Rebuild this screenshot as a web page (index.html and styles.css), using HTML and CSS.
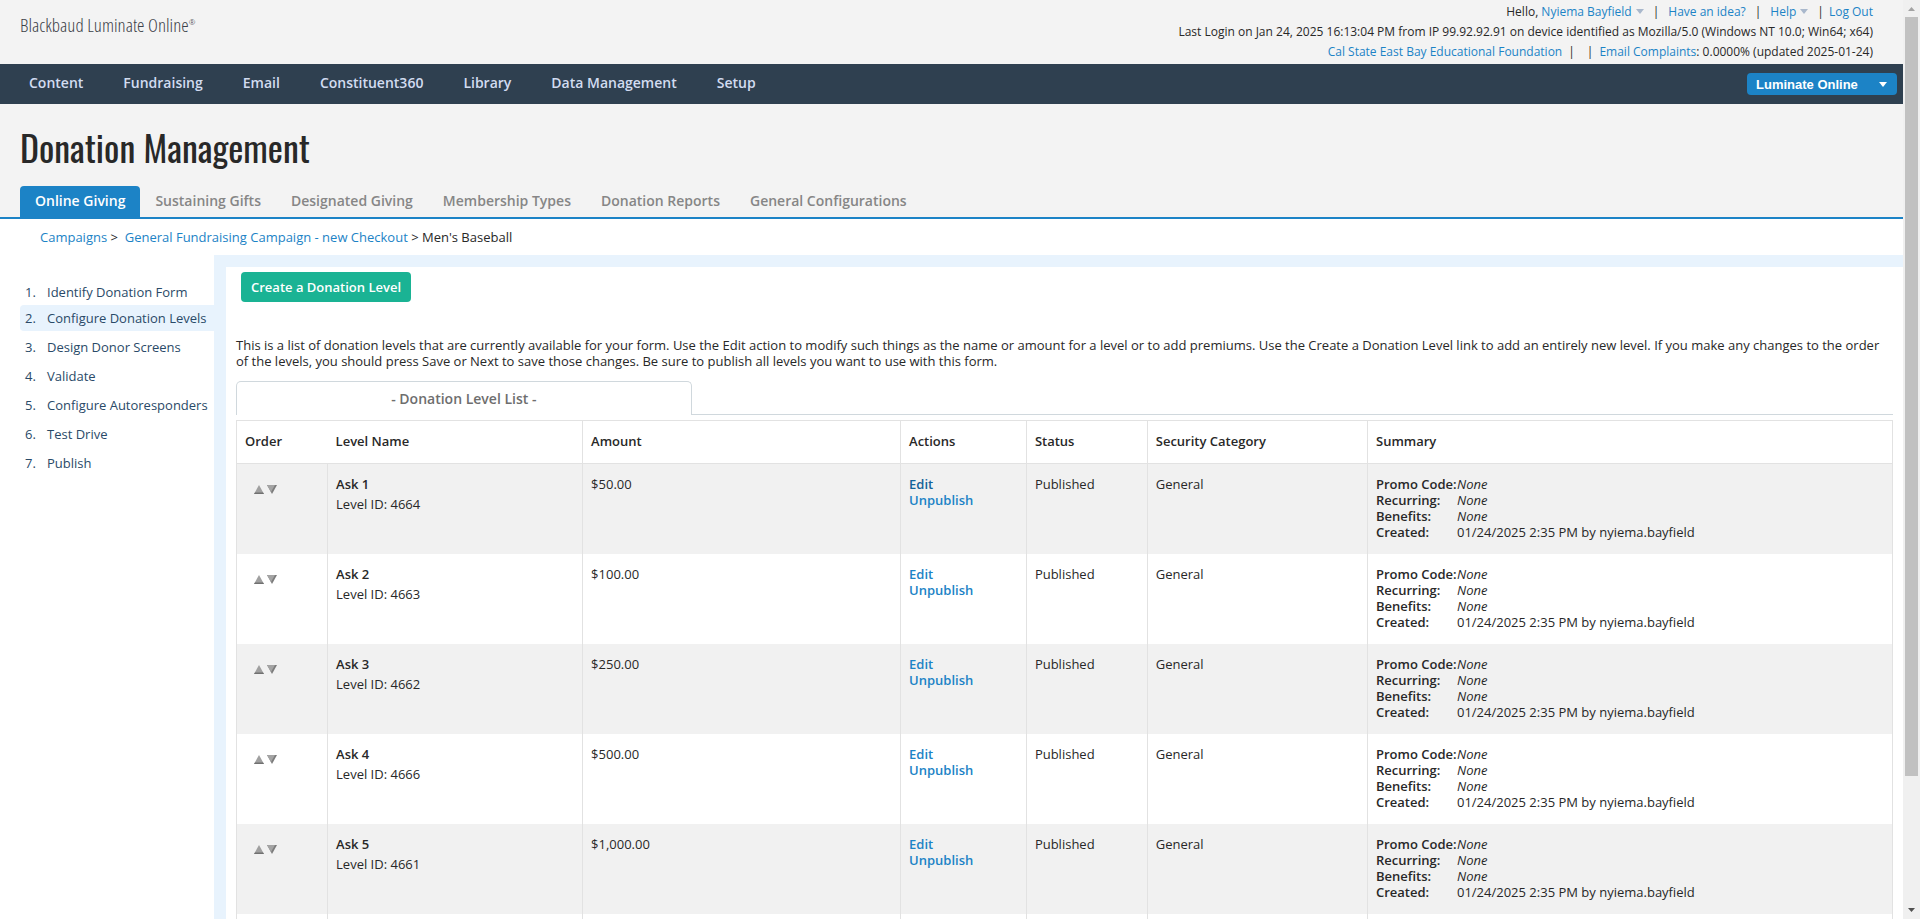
FILE: index.html
```html
<!DOCTYPE html>
<html lang="en">
<head>
    <meta charset="UTF-8">
    <meta name="viewport" content="width=device-width, initial-scale=1.0">
    <title>Donation Management</title>
    <link rel="stylesheet" href="styles.css">
</head>
<body>
    <div class="page">
        <header class="top">
            <div class="brand">Blackbaud Luminate Online<sup>®</sup></div>
            <div class="account">
                <div class="user-links">Hello, <a href="#">Nyiema Bayfield<span class="caret"></span></a><span class="bar">|</span><a href="#">Have an idea?</a><span class="bar">|</span><a href="#">Help<span class="caret"></span></a><span class="bar">|</span><a href="#">Log Out</a></div>
                <div>Last Login on Jan 24, 2025 16:13:04 PM from IP 99.92.92.91 on device identified as Mozilla/5.0 (Windows NT 10.0; Win64; x64)</div>
                <div><a href="#">Cal State East Bay Educational Foundation</a><span class="bar">|</span><span class="bar">|</span><a href="#">Email Complaints</a>: 0.0000% (updated 2025-01-24)</div>
            </div>
        </header>
        <nav class="main-nav">
            <a href="#">Content</a>
            <a href="#">Fundraising</a>
            <a href="#">Email</a>
            <a href="#">Constituent360</a>
            <a href="#">Library</a>
            <a href="#">Data Management</a>
            <a href="#">Setup</a>
            <button class="product" type="button">Luminate Online<span class="caret"></span></button>
        </nav>
        <h1>Donation Management</h1>
        <nav class="tabs">
            <a class="active" href="#">Online Giving</a>
            <a href="#">Sustaining Gifts</a>
            <a href="#">Designated Giving</a>
            <a href="#">Membership Types</a>
            <a href="#">Donation Reports</a>
            <a href="#">General Configurations</a>
        </nav>
        <div class="breadcrumb"><a href="#">Campaigns</a> &gt; &nbsp;<a href="#">General Fundraising Campaign - new Checkout</a> &gt; Men's Baseball</div>
        <div class="columns">
            <ol class="steps">
                <li><a href="#"><span>1.</span>Identify Donation Form</a></li>
                <li class="current"><a href="#"><span>2.</span>Configure Donation Levels</a></li>
                <li><a href="#"><span>3.</span>Design Donor Screens</a></li>
                <li><a href="#"><span>4.</span>Validate</a></li>
                <li><a href="#"><span>5.</span>Configure Autoresponders</a></li>
                <li><a href="#"><span>6.</span>Test Drive</a></li>
                <li><a href="#"><span>7.</span>Publish</a></li>
            </ol>
            <main class="content">
                <button class="create" type="button">Create a Donation Level</button>
                <p>This is a list of donation levels that are currently available for your form. Use the Edit action to modify such things as the name or amount for a level or to add premiums. Use the Create a Donation Level link to add an entirely new level. If you make any changes to the order of the levels, you should press Save or Next to save those changes. Be sure to publish all levels you want to use with this form.</p>
                <div class="list-tabs"><h2>- Donation Level List -</h2></div>
                <table class="levels">
                    <colgroup>
                        <col class="c-order"><col class="c-name"><col class="c-amount"><col class="c-actions"><col class="c-status"><col class="c-security"><col>
                    </colgroup>
                    <thead>
                        <tr><th>Order</th><th>Level Name</th><th>Amount</th><th>Actions</th><th>Status</th><th>Security Category</th><th>Summary</th></tr>
                    </thead>
                    <tbody id="levels"></tbody>
                    <tfoot>
                        <tr><td></td><td></td><td></td><td></td><td></td><td></td><td></td></tr>
                    </tfoot>
                </table>
            </main>
        </div>
    </div>
    <div class="scrollbar">
        <svg width="17" height="17" viewBox="0 0 17 17"><path d="M5 11h7L8.500 7z" fill="#a3a3a3"/></svg>
        <div class="track"></div>
        <div class="rest"></div>
        <svg width="17" height="17" viewBox="0 0 17 17"><path d="M5 6h7L8.500 10z" fill="#505050"/></svg>
    </div>
    <script>
        let levels = [
            ["Ask 1", 4664, "$50.00"],
            ["Ask 2", 4663, "$100.00"],
            ["Ask 3", 4662, "$250.00"],
            ["Ask 4", 4666, "$500.00"],
            ["Ask 5", 4661, "$1,000.00"]
        ];
        let rows = "";
        for (let i = 0; i < levels.length; i++) {
            rows += `<tr>
                <td class="order">
                    <button type="button" aria-label="Move up"><svg width="10" height="9" viewBox="0 0 10 9"><path d="M0 9h10L5 0z" fill="#a0a0a0"/><path d="M0 9h10L9 7.500H1z" fill="#707070"/></svg></button>
                    <button type="button" aria-label="Move down"><svg width="10" height="9" viewBox="0 0 10 9"><path d="M0 0h10L5 9z" fill="#7c7c7c"/><path d="M0 0h8L4 7z" fill="#a4a4a4"/></svg></button>
                </td>
                <td><b>${levels[i][0]}</b><div class="level-id">Level ID: ${levels[i][1]}</div></td>
                <td>${levels[i][2]}</td>
                <td class="actions"><a href="#">Edit</a><a href="#">Unpublish</a></td>
                <td>Published</td>
                <td>General</td>
                <td><dl>
                    <dt>Promo Code:</dt><dd><i>None</i></dd>
                    <dt>Recurring:</dt><dd><i>None</i></dd>
                    <dt>Benefits:</dt><dd><i>None</i></dd>
                    <dt>Created:</dt><dd>01/24/2025 2:35 PM by nyiema.bayfield</dd>
                </dl></td>
            </tr>`;
        }
        document.getElementById("levels").innerHTML = rows;
    </script>
</body>
</html>
```
FILE: styles.css
```css
* {
    box-sizing: border-box;
}
body {
    margin: 0;
    display: flex;
    height: 100vh;
    overflow: hidden;
    background: #fff;
    color: #282828;
    font: 13px/16px "Open Sans", sans-serif;
}
a {
    color: #1c83c6;
    text-decoration: none;
}
button {
    border: 0;
    cursor: pointer;
}
.page {
    flex: 1;
    overflow: hidden;
    background: linear-gradient(#f3f3f3 217px, #fff 217px);
}
.top {
    display: flex;
    justify-content: space-between;
    height: 64px;
    padding: 2px 30px 0 20px;
}
.brand {
    color: #3c4148;
    font: 300 19px/46px "Open Sans Condensed Light", "Oswald Light", "Oswald", sans-serif;
}
.brand sup {
    font-size: 8px;
    line-height: 1px;
}
.account {
    font-size: 12px;
    line-height: 20px;
    text-align: right;
}
.bar {
    margin: 0 6px;
}
.user-links .bar {
    margin: 0 9px;
}
.user-links .bar:nth-last-child(2) {
    margin-right: 5px;
}
.caret {
    display: inline-block;
    margin-left: 4px;
    border: 4px solid transparent;
    border-top: 5px solid #a9b8cc;
    border-bottom: 0;
    vertical-align: 2px;
}
.main-nav {
    display: flex;
    align-items: center;
    gap: 40px;
    height: 40px;
    padding: 0 6px 0 29px;
    background: #2f4050;
}
.main-nav a {
    padding-bottom: 2px;
    color: #d2dcf0;
    font-size: 14px;
    font-weight: 600;
}
.product {
    display: flex;
    align-items: center;
    justify-content: space-between;
    width: 150px;
    height: 22px;
    margin-left: auto;
    padding: 0 10px 0 9px;
    border-radius: 4px;
    background: #1c83c6;
    color: #fff;
    font: bold 13px "Liberation Sans", sans-serif;
}
.product .caret {
    border-top-color: #fff;
}
h1 {
    margin: 0;
    padding: 13px 20px 9px;
    font: 36px/60px "Oswald", sans-serif;
}
.tabs {
    display: flex;
    height: 33px;
    padding-left: 20px;
    border-bottom: 2px solid #1c83c6;
}
.tabs a {
    padding: 0 15px;
    color: #868686;
    font-size: 14px;
    font-weight: 600;
    line-height: 30px;
}
.tabs .active {
    border-radius: 4px 4px 0 0;
    background: #1c83c6;
    color: #fff;
}
.breadcrumb {
    padding: 10px 40px;
}
.columns {
    display: flex;
}
.steps {
    width: 214px;
    margin: 0;
    padding: 24px 0 0 20px;
    list-style: none;
}
.steps li {
    margin-bottom: 3px;
    padding-left: 5px;
    border-radius: 4px 0 0 4px;
    line-height: 26px;
}
.steps li:first-child {
    margin-bottom: 0;
}
.steps a {
    display: flex;
    color: #2a4a68;
    white-space: nowrap;
}
.steps span {
    width: 22px;
}
.steps .current {
    background: #e8f3fd;
}
.content {
    flex: 1;
    padding: 5px 10px 0;
    border: 12px solid #e8f3fd;
    border-right: 0;
    border-bottom: 0;
}
.create {
    height: 30px;
    margin-left: 5px;
    padding: 0 10px;
    border-radius: 4px;
    background: #1ab394;
    color: #fff;
    font: 600 13px "Open Sans", sans-serif;
}
.content p {
    margin: 35px 0 12px;
}
.list-tabs {
    border-bottom: 1px solid #d0d8dd;
    margin-bottom: 5px;
}
.list-tabs h2 {
    width: 27.5%;
    margin: 0 0 -1px;
    border: 1px solid #d0d8dd;
    border-bottom: 0;
    border-radius: 5px 5px 0 0;
    background: #fff;
    color: #6e6e6e;
    font-size: 14px;
    font-weight: 600;
    line-height: 33px;
    text-align: center;
}
.levels {
    width: 100%;
    table-layout: fixed;
    border-collapse: collapse;
    border: 1px solid #e2e2e2;
}
.c-order { width: 5.5%; }
.c-name { width: 15.4%; }
.c-amount { width: 19.2%; }
.c-actions { width: 7.6%; }
.c-status { width: 7.3%; }
.c-security { width: 13.3%; }
.levels th {
    height: 43px;
    padding: 0 8px 2px;
    border: 1px solid #e2e2e2;
    font-weight: 600;
    text-align: left;
}
.levels th:first-child {
    border-right: 0;
}
.levels th:nth-child(2) {
    border-left: 0;
}
.levels td {
    height: 90px;
    padding: 12px 8px;
    border-left: 1px solid #e2e2e2;
    vertical-align: top;
}
.levels tbody tr:nth-child(odd) {
    background: #f1f1f1;
}
.levels b,
.levels dt,
.actions a {
    font-weight: 600;
}
.level-id {
    margin-top: 4px;
}
.levels .order {
    padding: 17px 0 0 17px;
}
.order button {
    padding: 0;
    background: none;
}
.actions a {
    display: block;
}
.levels tr:first-child .actions a:first-child {
    color: #14639a;
}
dl {
    display: grid;
    grid-template-columns: 81px 1fr;
    margin: 0;
}
dd {
    margin: 0;
}
.scrollbar {
    display: flex;
    flex-direction: column;
    width: 17px;
    background: #f0f0f0;
}
.track {
    flex: 6;
    margin: 0 2px;
    background: #c1c1c1;
}
.rest {
    flex: 1;
}
```
